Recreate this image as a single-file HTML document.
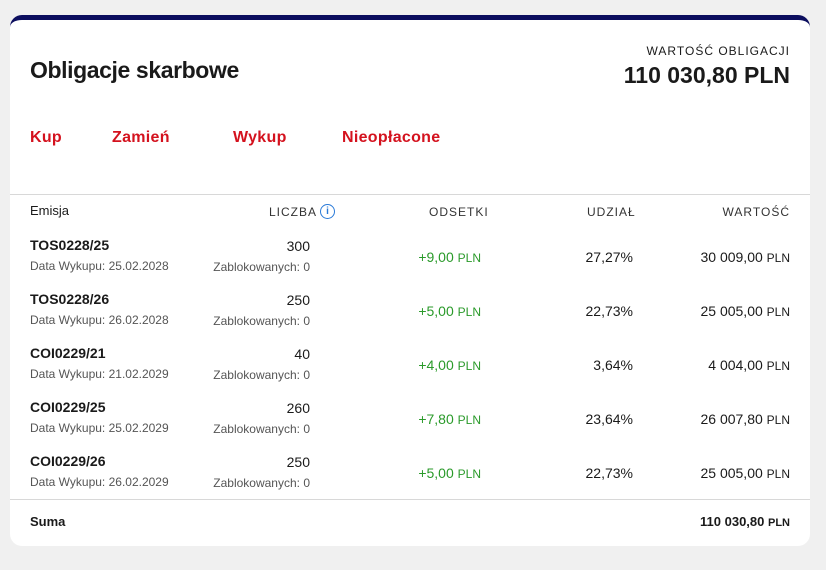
<!DOCTYPE html><html><head><meta charset="utf-8"><style>
body{margin:0;background:#f0f0f0;width:826px;height:570px;font-family:"Liberation Sans",sans-serif;color:#1a1a1a;position:relative;overflow:hidden}
.card{position:absolute;left:10px;top:15px;width:800px;height:531px;background:#fff;border-radius:12px;border-top:5px solid #0c0e5e;box-sizing:border-box}
.a{position:absolute;white-space:nowrap}
.r{text-align:right}
.t{font-size:23px;font-weight:bold;left:20px;top:37px;letter-spacing:-0.4px}
.lk{color:#d4121e;font-weight:bold;font-size:16px;top:109px;letter-spacing:0.3px}
.h{font-size:12px;letter-spacing:1px;color:#333;top:185px}
.n{font-size:14px;font-weight:bold}
.s{font-size:12px;color:#555}
.g{color:#2a9a2a;font-size:14px}
.g small,.v small{font-size:12px}
.v{font-size:14px}
</style></head><body><div class="card">
<div class="a t">Obligacje skarbowe</div>
<div class="a r" style="right:20px;top:24px;font-size:12px;letter-spacing:1px">WARTOŚĆ OBLIGACJI</div>
<div class="a r" style="right:20px;top:42px;font-size:23px;font-weight:bold">110 030,80 PLN</div>
<div class="a lk" style="left:20px">Kup</div>
<div class="a lk" style="left:102px">Zamień</div>
<div class="a lk" style="left:223px">Wykup</div>
<div class="a lk" style="left:332px">Nieopłacone</div>
<div class="a" style="left:0;right:0;top:174px;border-top:1px solid #d8d8d8"></div>
<div class="a" style="left:20px;top:183px;font-size:13px">Emisja</div>
<div class="a h" style="left:259px">LICZBA</div>
<div class="a" style="left:310px;top:184px;width:13px;height:13px;border:1.3px solid #2a7ad8;border-radius:50%;color:#2a7ad8;font-size:10px;font-weight:bold;text-align:center;line-height:13px">i</div>
<div class="a h" style="left:419px">ODSETKI</div>
<div class="a h" style="left:577px">UDZIAŁ</div>
<div class="a h r" style="right:20px">WARTOŚĆ</div>
<div id="rows"></div>
<div class="a" style="left:0;right:0;top:479px;border-top:1px solid #d8d8d8"></div>
<div class="a" style="left:20px;top:494px;font-size:13px;font-weight:bold">Suma</div>
<div class="a r" style="right:20px;top:494px;font-size:13px;font-weight:bold">110 030,80 <small style="font-size:11px">PLN</small></div>
</div>
<script>
var d=[["TOS0228/25","25.02.2028","300","+9,00","27,27%","30 009,00"],["TOS0228/26","26.02.2028","250","+5,00","22,73%","25 005,00"],["COI0229/21","21.02.2029","40","+4,00","3,64%","4 004,00"],["COI0229/25","25.02.2029","260","+7,80","23,64%","26 007,80"],["COI0229/26","26.02.2029","250","+5,00","22,73%","25 005,00"]];
var h="";d.forEach(function(r,i){var y=217+i*54;
h+='<div class="a n" style="left:20px;top:'+y+'px">'+r[0]+'</div>'+
'<div class="a s" style="left:20px;top:'+(y+22)+'px">Data Wykupu: '+r[1]+'</div>'+
'<div class="a v r" style="right:500px;top:'+(y+1)+'px">'+r[2]+'</div>'+
'<div class="a s r" style="right:500px;top:'+(y+23)+'px">Zablokowanych: 0</div>'+
'<div class="a g r" style="right:329px;top:'+(y+12)+'px">'+r[3]+' <small>PLN</small></div>'+
'<div class="a v r" style="right:177px;top:'+(y+12)+'px">'+r[4]+'</div>'+
'<div class="a v r" style="right:20px;top:'+(y+12)+'px">'+r[5]+' <small>PLN</small></div>';});
document.getElementById("rows").outerHTML=h;
</script></body></html>
